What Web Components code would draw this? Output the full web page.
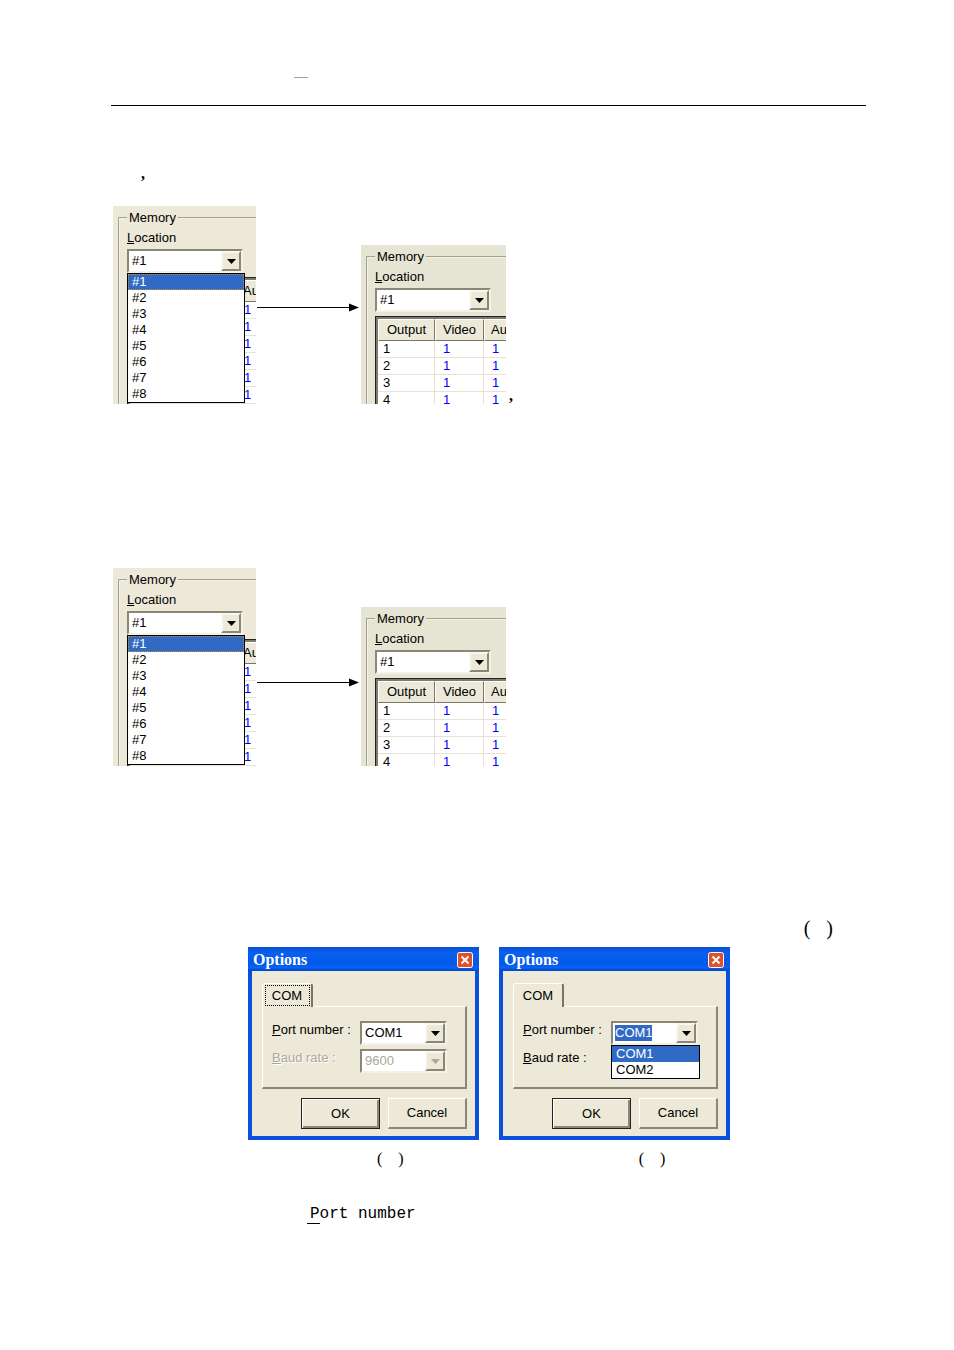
<!DOCTYPE html>
<html lang="en">
<head>
<meta charset="utf-8">
<meta name="viewport" content="width=device-width, initial-scale=1">
<title>Memory and Options</title>
<style>
  body { margin: 0; background: #fff; color: #000; font: 16px/20px "Liberation Serif", serif; }
  .after { padding-left: 3px; font-weight: bold; line-height: 16px; }
  .key { padding-left: 3px; border-bottom: 1px solid #000; line-height: 16px; }
</style>
</head>
<body>
<manual-page>
  <span slot="header">—</span>
  <p class="lead">,</p>
  <figure class="flow">
    <memory-panel open></memory-panel>
    <flow-arrow></flow-arrow>
    <memory-panel></memory-panel>
    <span class="after">,</span>
  </figure>
  <figure class="flow second">
    <memory-panel open></memory-panel>
    <flow-arrow low></flow-arrow>
    <memory-panel></memory-panel>
  </figure>
  <p class="ref"><empty-ref large></empty-ref></p>
  <div class="dialogs">
    <options-dialog focused></options-dialog>
    <options-dialog open></options-dialog>
  </div>
  <div class="captions">
    <empty-ref></empty-ref>
    <empty-ref></empty-ref>
  </div>
  <p class="term"><span class="key">P</span>ort number</p>
</manual-page>

<script>
(() => {
  const attach = (el, html) => {
    const template = document.createElement('template');
    template.innerHTML = html;
    el.attachShadow({ mode: 'open' }).appendChild(template.content.cloneNode(true));
    return el.shadowRoot;
  };

  class ManualPage extends HTMLElement {
    constructor() {
      super();
      attach(this, `
        <style>
          :host { display: block; padding: 0 88px 40px 111px; }
          header {
            box-sizing: border-box;
            height: 106px;
            padding: 67px 0 0 183px;
            border-bottom: 1px solid #000;
            color: #555;
            font-size: 14px;
          }
          ::slotted(*) { margin: 0; }
          ::slotted(.lead) { padding: 58px 0 22px 30px; font-weight: bold; }
          ::slotted(.flow) { display: flex; align-items: flex-end; padding-left: 2px; }
          ::slotted(.second) { margin-top: 164px; }
          ::slotted(.ref) { display: flex; justify-content: flex-end; margin-top: 150px; padding-right: 33px; }
          ::slotted(.dialogs) { display: flex; gap: 20px; margin-top: 7px; padding-left: 137px; }
          ::slotted(.captions) { display: flex; gap: 235px; margin-top: 9px; padding-left: 266px; }
          ::slotted(.term) { margin-top: 33px; padding-left: 196px; font: 16px/24px "Liberation Mono", monospace; }
        </style>
        <header><slot name="header"></slot></header>
        <main><slot></slot></main>
      `);
    }
  }

  // pair of parentheses with nothing between them
  class EmptyRef extends HTMLElement {
    constructor() {
      super();
      attach(this, `
        <style>
          :host { display: flex; gap: 16px; font-size: 16px; line-height: 20px; }
          :host([large]) { font-size: 20px; line-height: 24px; }
        </style>
        <span>(</span><span>)</span>
      `);
    }
  }

  class FlowArrow extends HTMLElement {
    constructor() {
      super();
      attach(this, `
        <style>
          :host { display: block; align-self: flex-start; width: 105px; padding-top: 96px; }
          :host([low]) { padding-top: 109px; }
          svg { display: block; }
        </style>
        <svg width="105" height="10" viewBox="0 0 105 10" aria-hidden="true">
          <path d="M1 5.5H95" stroke="#000"/>
          <path d="M93 1.5L103 5.5L93 9.5Z"/>
        </svg>
      `);
    }
  }

  // attributes: label, options (comma separated), row, open, editable, disabled
  class XpCombo extends HTMLElement {
    connectedCallback() {
      if (this.shadowRoot) return;
      const label = this.getAttribute('label');
      const options = this.getAttribute('options').split(',');
      const disabled = this.hasAttribute('disabled') ? 'disabled' : '';
      const field = this.hasAttribute('editable')
        ? `<input id="field" value="${options[0]}">`
        : `<select id="field" ${disabled}>${options.map(o => `<option>${o}</option>`).join('')}</select>`;
      const list = this.hasAttribute('open')
        ? `<ul role="listbox" aria-label="${label}">${options.map((o, i) =>
            `<li role="option" aria-selected="${i === 0}">${o}</li>`).join('')}</ul>`
        : '';

      const root = attach(this, `
        <style>
          :host { display: grid; row-gap: 3px; font: 13px/16px "Liberation Sans", sans-serif; color: #000; }
          :host([row]) { grid-template-columns: 88px 1fr; align-items: center; }
          :host([row]) label { padding-bottom: 6px; }
          :host([disabled]) label { color: #aca899; text-shadow: 1px 1px #fff; }
          .box {
            position: relative;
            box-sizing: border-box;
            display: flex;
            height: 24px;
            border: 2px solid;
            border-color: #8a8776 #f4f2e8 #f4f2e8 #8a8776;
            background: #fff;
          }
          select, input {
            appearance: none;
            margin: 0;
            border: 0;
            border-radius: 0;
            outline: 0;
            background: none;
            color: inherit;
            font: inherit;
          }
          select { flex: 1; min-width: 0; padding: 0 3px; opacity: 1; }
          select:disabled { color: #aca899; }
          input { width: 37px; margin: 2px auto 2px 2px; padding: 0; background: #316ac5; color: #fff; }
          button {
            display: grid;
            place-items: center;
            width: 20px;
            padding: 0;
            border: 2px solid;
            border-color: #f8f7f0 #8a8776 #8a8776 #f8f7f0;
            background: #ece9d8;
          }
          svg { fill: #000; }
          button:disabled svg { fill: #aca899; }
          ul {
            position: absolute;
            z-index: 1;
            top: calc(100% + 2px);
            left: -2px;
            right: -4px;
            margin: 0;
            padding: 0;
            border: 1px solid #000;
            background: #fff;
            list-style: none;
          }
          li { padding-left: 4px; line-height: 16px; }
          li[aria-selected="true"] { background: #316ac5; color: #fff; }
          :host(:not([editable])) li[aria-selected="true"] { outline: 1px dotted #c28b3a; outline-offset: -1px; }
        </style>
        <label for="field"><u>${label[0]}</u>${label.slice(1)}</label>
        <div class="box">
          ${field}
          <button type="button" aria-label="Open" ${disabled}>
            <svg width="9" height="5" viewBox="0 0 9 5"><path d="M0 0H9L4.5 5Z"/></svg>
          </button>
          ${list}
        </div>
      `);

      const select = root.querySelector('select');
      root.querySelector('button').addEventListener('click', () => {
        if (select && select.showPicker) select.showPicker();
      });
    }
  }

  class MemoryPanel extends HTMLElement {
    connectedCallback() {
      if (this.shadowRoot) return;
      const open = this.hasAttribute('open');
      // the open list lies over the first two columns
      const head = open ? ['', '', 'Au'] : ['Output', 'Video', 'Au'];
      const rows = open
        ? [...Array(6).fill(['', '', '1']), ['', '', '']]
        : [1, 2, 3, 4].map(n => [n, 1, 1]);
      attach(this, `
        <style>
          :host {
            display: block;
            box-sizing: border-box;
            flex: none;
            width: 145px;
            height: 159px;
            overflow: hidden;
            background: #e6e5d3;
            font: 13px/16px "Liberation Sans", sans-serif;
          }
          :host([open]) { width: 143px; height: 198px; background: #ece9d8; }
          fieldset {
            width: 260px;
            margin: 4px 0 0 5px;
            padding: 4px 7px;
            border: 2px groove #f4f2e8;
          }
          legend { padding: 0 2px; }
          xp-combo { width: 116px; }
          .grid {
            margin-top: 4px;
            padding: 2px 0 0 2px;
            border: solid #222;
            border-width: 1px 0 0 1px;
            background: #7d7b6e;
          }
          table {
            width: 180px;
            table-layout: fixed;
            border-collapse: separate;
            border-spacing: 0;
            background: #fff;
          }
          th, td { box-sizing: border-box; padding: 0; }
          th {
            height: 22px;
            border: 1px solid;
            border-color: #fff #77756a #77756a #fff;
            background: #ece9d8;
            font-weight: normal;
          }
          th:nth-child(3) { padding-left: 6px; text-align: left; }
          td {
            height: 17px;
            padding-left: 8px;
            border: solid #e6e3d2;
            border-width: 0 1px 1px 0;
            color: #00f;
            line-height: 16px;
          }
          td:first-child { padding-left: 5px; color: #000; }
        </style>
        <fieldset>
          <legend>Memory</legend>
          <xp-combo label="Location" options="#1,#2,#3,#4,#5,#6,#7,#8" ${open ? 'open' : ''}></xp-combo>
          <div class="grid">
            <table>
              <colgroup><col style="width:57px"><col style="width:49px"><col></colgroup>
              <thead><tr>${head.map(h => `<th>${h}</th>`).join('')}</tr></thead>
              <tbody>${rows.map(r => `<tr>${r.map(c => `<td>${c}</td>`).join('')}</tr>`).join('')}</tbody>
            </table>
          </div>
        </fieldset>
      `);
    }
  }

  class OptionsDialog extends HTMLElement {
    connectedCallback() {
      if (this.shadowRoot) return;
      const open = this.hasAttribute('open');
      attach(this, `
        <style>
          :host { display: block; width: 231px; font: 13px/16px "Liberation Sans", sans-serif; }
          header {
            display: flex;
            align-items: center;
            justify-content: space-between;
            height: 24px;
            padding: 2px 6px 0 5px;
            box-sizing: border-box;
            background: linear-gradient(#0a4fd0, #0a5ff0 25%, #0058e8 70%, #0a62f5 85%, #0046c8);
          }
          h2 { margin: 0; color: #fff; font: bold 16px/20px "Liberation Serif", serif; }
          .close { width: 16px; height: 16px; padding: 0; border: 0; background: none; }
          .close svg { display: block; }
          .body { padding: 12px 8px 7px 10px; border: 4px solid #0a50dc; border-top: 0; background: #ece9d8; }
          .tab {
            position: relative;
            display: block;
            box-sizing: border-box;
            width: 51px;
            height: 24px;
            margin-bottom: -1px;
            padding: 0;
            border: solid;
            border-width: 1px 2px 0 1px;
            border-color: #fff #77756a #fff #fff;
            border-radius: 3px 3px 0 0;
            background: #ece9d8;
            color: #000;
            font: inherit;
          }
          :host([focused]) .tab::after { content: ""; position: absolute; inset: 1px 1px 1px 2px; border: 1px dotted #000; }
          .page {
            display: grid;
            gap: 4px;
            box-sizing: border-box;
            height: 83px;
            padding: 14px 18px 14px 9px;
            border: solid;
            border-width: 1px 2px 2px 1px;
            border-color: #fff #8a8776 #8a8776 #fff;
          }
          footer { display: flex; justify-content: flex-end; gap: 8px; padding-top: 9px; }
          footer button {
            box-sizing: border-box;
            width: 79px;
            height: 31px;
            padding: 0;
            border: solid;
            border-width: 1px 2px 2px 1px;
            border-color: #fff #8a8776 #8a8776 #fff;
            background: #ece9d8;
            color: #000;
            font: inherit;
          }
          footer .default { border: 1px solid #222; box-shadow: inset 1px 1px #fff, inset -2px -2px #8a8776; }
        </style>
        <header>
          <h2>Options</h2>
          <button class="close" type="button" aria-label="Close">
            <svg width="16" height="16" viewBox="0 0 16 16">
              <rect x=".5" y=".5" width="15" height="15" rx="2" fill="#e2502b" stroke="#fff"/>
              <path d="M4.5 4.5L11.5 11.5M11.5 4.5L4.5 11.5" stroke="#fff" stroke-width="2"/>
            </svg>
          </button>
        </header>
        <div class="body">
          <button class="tab" type="button" role="tab" aria-selected="true">COM</button>
          <div class="page" role="tabpanel">
            <xp-combo row label="Port number :" options="COM1,COM2" ${open ? 'open editable' : ''}></xp-combo>
            <xp-combo row label="Baud rate :" options="9600" ${open ? 'covered' : 'disabled'}></xp-combo>
          </div>
          <footer>
            <button class="default" type="button">OK</button>
            <button type="button">Cancel</button>
          </footer>
        </div>
      `);
      // the baud combo is under the open port list, only its label stays in view
      const covered = this.shadowRoot.querySelector('[covered]');
      if (covered) covered.shadowRoot.querySelector('.box').style.visibility = 'hidden';
    }
  }

  customElements.define('manual-page', ManualPage);
  customElements.define('empty-ref', EmptyRef);
  customElements.define('flow-arrow', FlowArrow);
  customElements.define('xp-combo', XpCombo);
  customElements.define('memory-panel', MemoryPanel);
  customElements.define('options-dialog', OptionsDialog);
})();
</script>
</body>
</html>
